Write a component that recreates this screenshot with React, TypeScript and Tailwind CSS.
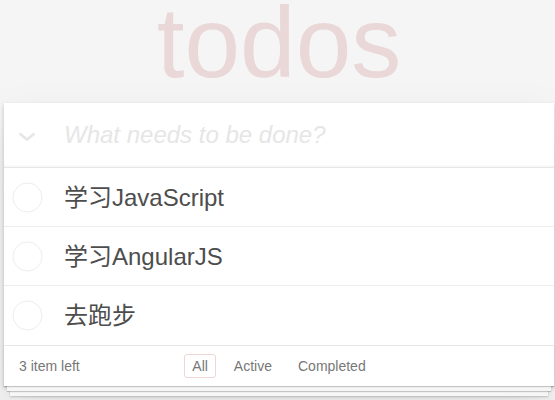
import { useState } from "react";

type Todo = { id: number; title: string; done: boolean };

const INITIAL: Todo[] = [
  { id: 1, title: "学习JavaScript", done: false },
  { id: 2, title: "学习AngularJS", done: false },
  { id: 3, title: "去跑步", done: false },
];

const FILTERS = ["All", "Active", "Completed"] as const;

export default function App() {
  const [todos] = useState(INITIAL);
  const [filter, setFilter] = useState<(typeof FILTERS)[number]>("All");
  const left = todos.filter((t) => !t.done).length;

  return (
    <div className="min-h-screen bg-[#f5f5f5] pl-[4px] font-['Liberation_Sans','Noto_Sans_CJK_SC',sans-serif] text-[#4d4d4d]">
      <section className="w-[550px]">
        <h1 className="text-center text-[100px] font-normal leading-[84px] text-[rgba(175,47,47,0.15)]">
          todos
        </h1>

        <div className="mt-[19px] bg-white shadow-[0_2px_4px_0_rgba(0,0,0,0.2),0_25px_50px_0_rgba(0,0,0,0.1)]">
          <header className="flex h-[64px] items-center shadow-[inset_0_-2px_1px_rgba(0,0,0,0.03)]">
            <span className="flex w-[60px] shrink-0 justify-start pl-[14px] pt-[2px]">
              <svg width="18" height="9" viewBox="0 0 18 9" aria-hidden>
                <polyline
                  points="1.5,1.5 9,7.5 16.5,1.5"
                  fill="none"
                  stroke="#e6e6e6"
                  strokeWidth="2.6"
                />
              </svg>
            </span>
            <input
              placeholder="What needs to be done?"
              className="min-w-0 flex-1 bg-transparent pr-4 text-[24px] leading-[34px] outline-none placeholder:italic placeholder:text-[#e6e6e6]"
            />
          </header>

          <ul className="border-t border-[#e6e6e6]">
            {todos.map((todo, i) => (
              <li
                key={todo.id}
                className={
                  "flex h-[59px] items-center " +
                  (i < todos.length - 1 ? "border-b border-[#ededed]" : "")
                }
              >
                <span className="flex w-[46px] shrink-0 justify-center pl-[1px]">
                  <svg width="31" height="31" viewBox="0 0 31 31" aria-hidden>
                    <circle cx="15.5" cy="15.5" r="14.5" fill="none" stroke="#ededed" strokeWidth="1" />
                  </svg>
                </span>
                <label className="pl-[14px] text-[24px] leading-[29px]">{todo.title}</label>
              </li>
            ))}
          </ul>

          <footer className="grid h-[41px] grid-cols-[1fr_auto_1fr] items-center border-t border-[#e6e6e6] px-[15px] text-[14px] text-[#777] shadow-[0_1px_1px_rgba(0,0,0,0.2),0_8px_0_-3px_#f6f6f6,0_9px_1px_-3px_rgba(0,0,0,0.2),0_16px_0_-6px_#f6f6f6,0_17px_2px_-6px_rgba(0,0,0,0.2)]">
            <span>{left} item left</span>
            <ul className="flex gap-[10px]">
              {FILTERS.map((f) => (
                <li key={f}>
                  <button
                    onClick={() => setFilter(f)}
                    className={
                      "rounded-[3px] border px-[7px] py-[3px] leading-[16px] " +
                      (filter === f ? "border-[rgba(175,47,47,0.2)]" : "border-transparent")
                    }
                  >
                    {f}
                  </button>
                </li>
              ))}
            </ul>
            <span />
          </footer>
        </div>
      </section>
    </div>
  );
}
